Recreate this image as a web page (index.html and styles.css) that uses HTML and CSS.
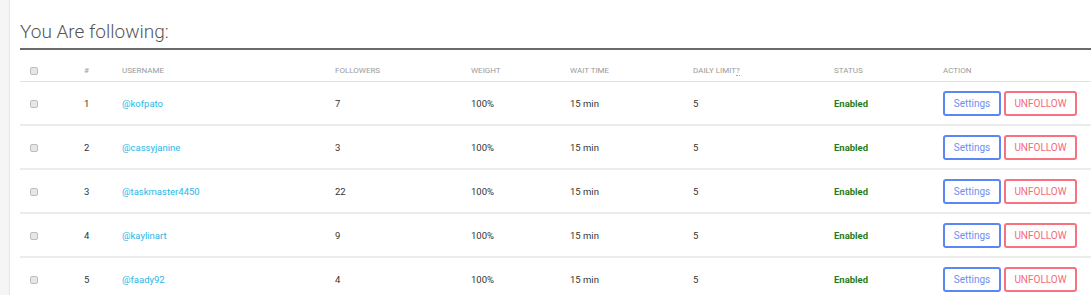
FILE: index.html
```html
<!DOCTYPE html>
<html lang="en">

<head>
    <meta charset="UTF-8">
    <title>Following</title>
    <link rel="stylesheet" href="styles.css">
</head>

<body>
    <div class="layout">
        <aside class="side"></aside>
        <main class="content">
            <h2 class="page-title">You Are following:</h2>
            <table class="follow-table">
                <colgroup>
                    <col class="c-check">
                    <col class="c-num">
                    <col class="c-user">
                    <col class="c-followers">
                    <col class="c-weight">
                    <col class="c-wait">
                    <col class="c-limit">
                    <col class="c-status">
                    <col class="c-action">
                </colgroup>
                <thead>
                    <tr>
                        <th><input type="checkbox" class="check"></th>
                        <th>#</th>
                        <th>Username</th>
                        <th>Followers</th>
                        <th>Weight</th>
                        <th>Wait Time</th>
                        <th>Daily Limit<span class="hint">?</span></th>
                        <th>Status</th>
                        <th>Action</th>
                    </tr>
                </thead>
                <tbody>
                    <tr>
                        <td><input type="checkbox" class="check"></td>
                        <td>1</td>
                        <td><a href="#" class="user">@kofpato</a></td>
                        <td>7</td>
                        <td>100%</td>
                        <td>15 min</td>
                        <td>5</td>
                        <td class="status">Enabled</td>
                        <td class="actions"><button class="btn btn-settings">Settings</button><button class="btn btn-unfollow">UNFOLLOW</button></td>
                    </tr>
                    <tr>
                        <td><input type="checkbox" class="check"></td>
                        <td>2</td>
                        <td><a href="#" class="user">@cassyjanine</a></td>
                        <td>3</td>
                        <td>100%</td>
                        <td>15 min</td>
                        <td>5</td>
                        <td class="status">Enabled</td>
                        <td class="actions"><button class="btn btn-settings">Settings</button><button class="btn btn-unfollow">UNFOLLOW</button></td>
                    </tr>
                    <tr>
                        <td><input type="checkbox" class="check"></td>
                        <td>3</td>
                        <td><a href="#" class="user">@taskmaster4450</a></td>
                        <td>22</td>
                        <td>100%</td>
                        <td>15 min</td>
                        <td>5</td>
                        <td class="status">Enabled</td>
                        <td class="actions"><button class="btn btn-settings">Settings</button><button class="btn btn-unfollow">UNFOLLOW</button></td>
                    </tr>
                    <tr>
                        <td><input type="checkbox" class="check"></td>
                        <td>4</td>
                        <td><a href="#" class="user">@kaylinart</a></td>
                        <td>9</td>
                        <td>100%</td>
                        <td>15 min</td>
                        <td>5</td>
                        <td class="status">Enabled</td>
                        <td class="actions"><button class="btn btn-settings">Settings</button><button class="btn btn-unfollow">UNFOLLOW</button></td>
                    </tr>
                    <tr>
                        <td><input type="checkbox" class="check"></td>
                        <td>5</td>
                        <td><a href="#" class="user">@faady92</a></td>
                        <td>4</td>
                        <td>100%</td>
                        <td>15 min</td>
                        <td>5</td>
                        <td class="status">Enabled</td>
                        <td class="actions"><button class="btn btn-settings">Settings</button><button class="btn btn-unfollow">UNFOLLOW</button></td>
                    </tr>
                </tbody>
            </table>
        </main>
    </div>
</body>

</html>
```

FILE: styles.css
```css
body {
    margin: 0;
    font-family: Roboto, 'Liberation Sans', sans-serif;
    background: #fff;
    color: #333;
    overflow: hidden;
}

.layout {
    display: flex;
    min-height: 100vh;
}

.side {
    width: 9px;
    flex: none;
    background: #f5f5f5;
    border-right: 1px solid #e6e6e6;
}

.content {
    flex: 1;
    padding-left: 10px;
    min-width: 0;
}

.page-title {
    margin: 19px 0 0;
    padding-bottom: 4px;
    font-size: 19px;
    font-weight: 300;
    line-height: 25px;
    color: #555;
    border-bottom: 2px solid #6a6a6a;
}

/* table */
.follow-table {
    width: 100%;
    table-layout: fixed;
    border-collapse: collapse;
    font-size: 9.5px;
}

.c-check { width: 54px; }
.c-num { width: 38px; }
.c-user { width: 213px; }
.c-followers { width: 136px; }
.c-weight { width: 99px; }
.c-wait { width: 123px; }
.c-limit { width: 141px; }
.c-status { width: 109px; }

.follow-table th {
    text-align: left;
    font-weight: 400;
    font-size: 8px;
    text-transform: uppercase;
    color: #9a9a9a;
    height: 21px;
    padding: 10px 0 0 10px;
    border-bottom: 1px solid #e2e2e2;
}

.follow-table td {
    height: 42px;
    padding: 0 0 0 10px;
    border-bottom: 2px solid #ececec;
    color: #333;
}

.check {
    appearance: none;
    -webkit-appearance: none;
    margin: 0;
    width: 8px;
    height: 8px;
    border: 1px solid #bdbdbd;
    border-radius: 2px;
    background: #e6e6e6;
    vertical-align: middle;
}

.hint {
    border-bottom: 1px dotted #aaa;
}

.user {
    color: #29b6e6;
    text-decoration: none;
}

.follow-table .status {
    font-weight: 700;
    color: #1f7d1f;
}

.actions {
    white-space: nowrap;
}

.btn {
    font-family: inherit;
    font-size: 10px;
    height: 25px;
    padding: 0;
    background: #fff;
    border-radius: 3px;
    border: 2px solid;
    cursor: pointer;
    vertical-align: middle;
}

.btn-settings {
    width: 58px;
    color: #6d8ff0;
    border-color: #5b86f5;
}

.btn-unfollow {
    width: 73px;
    margin-left: 3px;
    color: #f26a78;
    border-color: #f7727e;
}
```
